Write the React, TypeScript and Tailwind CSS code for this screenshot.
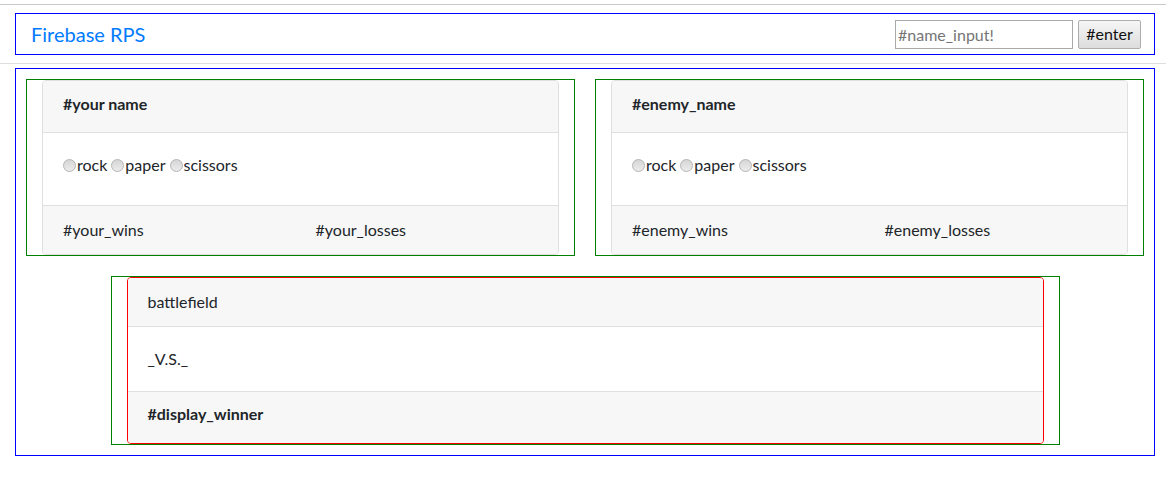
import React from 'react'

type PlayerProps = {
    name: string
    wins: string
    losses: string
    group: string
}

const Radio: React.FC<{ name: string; label: string }> = ({ name, label }) => (
    <label className="inline-flex items-center">
        <input
            type="radio"
            name={name}
            className="appearance-none w-[13px] h-[13px] rounded-full border border-[#b4b4b4] bg-gradient-to-b from-[#d6d6d6] to-[#ececec] m-0 mr-px"
        />
        <span>{label}</span>
    </label>
)

const PlayerCard: React.FC<PlayerProps> = ({ name, wins, losses, group }) => {
    return (
        <div className="border border-[#008000] px-[15px]">
            <div className="border border-[#dfdfdf] rounded-[4px] overflow-hidden">
                <div className="h-[51px] flex items-center px-5 pb-[5px] bg-[#f7f7f7] font-bold">{name}</div>
                <div className="h-[73px] flex items-center px-5 pb-[8px] border-t border-[#dfdfdf] gap-[4px]">
                    <Radio name={group} label="rock" />
                    <Radio name={group} label="paper" />
                    <Radio name={group} label="scissors" />
                </div>
                <div className="h-[49px] grid grid-cols-2 items-center px-5 bg-[#f7f7f7] border-t border-[#dfdfdf]">
                    <span>{wins}</span>
                    <span className="pl-[15px]">{losses}</span>
                </div>
            </div>
        </div>
    )
}

export default function App() {
    return (
        <div className="min-h-screen bg-white text-[#212529] text-[16px] leading-6 font-['Lato',sans-serif]">
            <div className="h-1" />
            <header className="border-t border-t-[#c8c8c8] border-b border-b-[#dedede] py-2">
                <nav className="ml-[15px] mr-[11px] border border-[#0000ff] h-[42px] flex items-center justify-between pl-[15px] pr-[13px]">
                    <span className="text-[20px] text-[#007bff]">Firebase RPS</span>
                    <div className="flex items-center gap-[5px]">
                        <input
                            type="text"
                            placeholder="#name_input!"
                            className="w-[178px] h-[29px] border border-[#a9a9a9] px-[2px] placeholder:text-[#757575] outline-none"
                        />
                        <button className="h-[29px] w-[63px] border border-[#adadad] rounded-[2px] bg-gradient-to-b from-[#f6f6f6] to-[#dddddd] text-[#111]">
                            #enter
                        </button>
                    </div>
                </nav>
            </header>

            <main className="mt-1 ml-[15px] mr-[11px] border border-[#0000ff] p-[10px]">
                <div className="grid grid-cols-2 gap-5">
                    <PlayerCard name="#your name" wins="#your_wins" losses="#your_losses" group="you" />
                    <PlayerCard name="#enemy_name" wins="#enemy_wins" losses="#enemy_losses" group="enemy" />
                </div>

                <div className="mt-5 mx-auto w-[949px] border border-[#008000] px-[15px]">
                    <div className="border border-[#ff0000] rounded-[4px] overflow-hidden">
                        <div className="h-[48px] flex items-center px-5 bg-[#f7f7f7]">battlefield</div>
                        <div className="h-[65px] flex items-center px-5 border-t border-t-[#dfdfdf]">_V.S._</div>
                        <div className="h-[52px] flex items-center px-5 pb-[7px] bg-[#f7f7f7] border-t border-t-[#dfdfdf] font-bold">
                            #display_winner
                        </div>
                    </div>
                </div>
            </main>
        </div>
    )
}
